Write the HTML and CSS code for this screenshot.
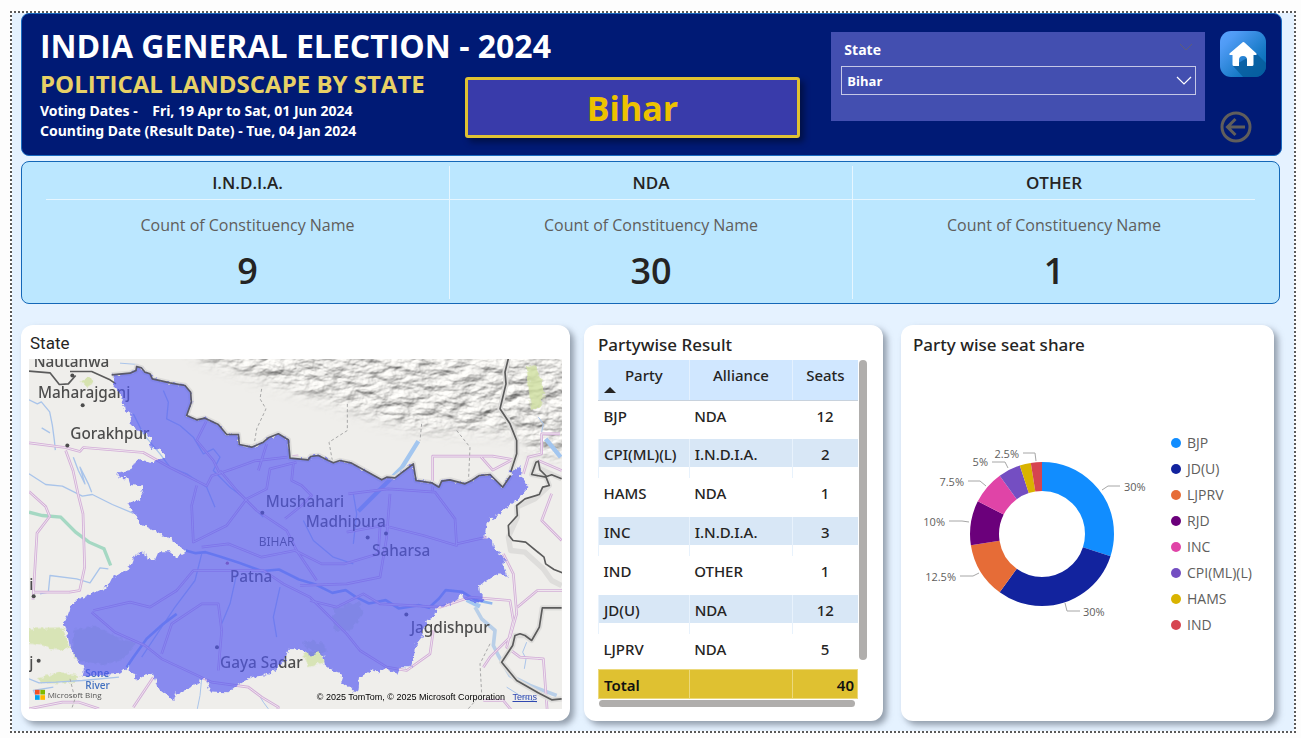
FILE: index.html
```html
<!DOCTYPE html>
<html lang="en">
<head>
<meta charset="utf-8">
<meta name="viewport" content="width=device-width, initial-scale=1">
<title>India General Election - 2024</title>
<link rel="stylesheet" href="styles.css">
</head>
<body>
<main class="report">
  <header class="banner">
    <h1 class="banner-title">INDIA GENERAL ELECTION - 2024</h1>
    <div class="banner-info">
      <h2 class="banner-subtitle">POLITICAL LANDSCAPE BY STATE</h2>
      <p class="banner-date">Voting Dates - &nbsp;&nbsp; Fri, 19 Apr to Sat, 01 Jun 2024</p>
      <p class="banner-date">Counting Date (Result Date) - Tue, 04 Jan 2024</p>
    </div>
    <div class="state-badge">Bihar</div>
    <div class="slicer">
      <div class="slicer-head">
        <label for="state-select">State</label>
        <button class="slicer-toggle" type="button" aria-label="Slicer options">
          <svg width="14" height="14" viewBox="0 0 14 14"><path d="M1 4l6 6 6-6" fill="none" stroke="#5d5d78" stroke-width="1"/></svg>
        </button>
      </div>
      <div class="select-wrap">
        <select id="state-select" class="slicer-select"><option>Bihar</option></select>
        <svg class="select-arrow" width="16" height="10" viewBox="0 0 16 10"><path d="M1 1l7 7 7-7" fill="none" stroke="#fff" stroke-width="1.2"/></svg>
      </div>
    </div>
    <nav class="banner-nav">
      <button class="nav-button" type="button" aria-label="Home">
        <svg width="46" height="46" viewBox="0 0 46 46">
          <defs>
            <linearGradient id="home-bg" x1="0" y1="0" x2="1" y2="1"><stop offset="0" stop-color="#5aa2ff"/><stop offset=".2" stop-color="#4f9bf5"/><stop offset=".7" stop-color="#1478c4"/><stop offset="1" stop-color="#0068b0"/></linearGradient>
            <clipPath id="home-clip"><rect width="46" height="46" rx="11"/></clipPath>
          </defs>
          <g clip-path="url(#home-clip)">
            <rect width="46" height="46" fill="url(#home-bg)"/>
            <path d="M36 22l12 12v14H25L13 35z" fill="#065a98" opacity=".75"/>
            <path d="M23 11L9.500 22.500q-.8 1.500 1 1.500h2v9.500q0 1.500 1.500 1.500h5v-6a4 4 0 0 1 8 0v6h5q1.500 0 1.500-1.500V24h2q1.800 0 1-1.500L24.500 11.500q-.8-.9-1.500-.5z" fill="#fff"/>
          </g>
        </svg>
      </button>
      <button class="nav-button" type="button" aria-label="Back">
        <svg width="32" height="32" viewBox="0 0 32 32" fill="none" stroke="#605e5c"><circle cx="16" cy="16" r="14" stroke-width="3"/><path d="M25 16H8M15.500 8l-8 8 8 8" stroke-width="3"/></svg>
      </button>
    </nav>
  </header>

  <section class="cards">
    <article class="card"><h3 class="card-title">I.N.D.I.A.</h3><p class="card-label">Count of Constituency Name</p><p class="card-value">9</p></article>
    <article class="card"><h3 class="card-title">NDA</h3><p class="card-label">Count of Constituency Name</p><p class="card-value">30</p></article>
    <article class="card"><h3 class="card-title">OTHER</h3><p class="card-label">Count of Constituency Name</p><p class="card-value">1</p></article>
  </section>

  <section class="panels">
    <article class="panel panel-map">
      <h3 class="map-title">State</h3>
      <div class="map">
        <svg class="map-art" viewBox="27 114 1599 1053" preserveAspectRatio="xMidYMid slice">
          <defs>
            <filter id="relief" x="0" y="0" width="1" height="1" color-interpolation-filters="sRGB">
              <feTurbulence type="fractalNoise" baseFrequency=".018 .032" numOctaves="4" seed="8"/>
              <feColorMatrix values="0 0 0 0 0 0 0 0 0 0 0 0 0 0 0 1 0 0 0 0"/>
              <feDiffuseLighting surfaceScale="9" lighting-color="#efeeeb" diffuseConstant="1.080"><feDistantLight azimuth="240" elevation="62"/></feDiffuseLighting>
            </filter>
            <filter id="soft" x="-.2" y="-.2" width="1.400" height="1.400"><feGaussianBlur stdDeviation="22"/></filter>
            <filter id="rough" x="-.05" y="-.05" width="1.100" height="1.100">
              <feTurbulence type="fractalNoise" baseFrequency=".07" numOctaves="2" seed="3" result="n"/>
              <feDisplacementMap in="SourceGraphic" in2="n" scale="20" xChannelSelector="R" yChannelSelector="G"/>
            </filter>
            <mask id="hills" maskUnits="userSpaceOnUse" x="27" y="114" width="1599" height="1053">
              <path d="M490 60L1700 60V400L1560 410 1500 340 1440 335 1200 325 1090 300 960 250 850 215 720 175 560 120z" fill="#fff" filter="url(#soft)"/>
            </mask>
            <g id="roads" fill="none" stroke-linejoin="round">
              <path d="M27 367l108 14 45 12 10-12 180 15 80 45 80 40 30 15 15-30 60-20 70-25 130-15M137 390l22 60 15 70 15 60 5 160-15 70-30 5-110 0M27 513l50 45 12 30-38 50-12 200M530 495l-15 60 5 110 100-50 60-80 60-30 10-60 80-20M600 450l50 60 60 60 90 60 30 60 60 90M560 300l-30 60 50 60 20 40M545 680l80-10 100 40 100-20 80 40 70 0 100-30 5-80M220 870l110-25 60 15 80-50 50-60h210l60 40 80 40 60 60 50 50 40 50 80 50 60 10 70-50 10-70M215 875l70 60 90 40 50 40 150 70 110 15 40 30 50 30-20 80M425 1000l30-90 90-60h50l10 80-10 120M400 1070l-60 90M27 1165l100-20 50 0 60 20M740 370l-25 80"/>
              <path d="M820 430l-5 50 30 15 30 30-30 30-50 40M985 520l120-15 140 10 60 80 5 80-100-30-120-30-110 20M1110 520l-10 130-20 120-100 20-140 5M1310 670l90-20M870 840l80 20 80-40 50 30 180 10 90-30 120 10 10 60-20 80 40 30 70 5 15 200M1238 510V407h180l60 10-60 32-35-40M1620 340h-55v60l-40 10-15 50M1555 420l70 30M1450 700l30 60 10 120-20 70-60 60-20 30M1492 860l60-50 75 0M1625 660l-60-60 30-80M1390 1140h60l50 60"/>
            </g>
          </defs>
          <rect x="27" y="114" width="1599" height="1053" fill="#efeeeb"/>
          <g mask="url(#hills)"><rect x="460" y="60" width="1200" height="400" filter="url(#relief)"/></g>
          <g fill="#cfe0a0" filter="url(#rough)">
            <path d="M1520 140l25-6 15 40 12 45-10 45-30 2-5-50z" opacity=".8"/>
            <path d="M182 180l28-8 10 14-20 14z" opacity=".8"/>
            <path d="M27 925l100-5 20 60-20 15-60-20-40-5zM50 1075l70-20 60 10-20 20-90 5z" opacity=".7"/>
            <path d="M850 995l50-5 15 35-50 15z" opacity=".7"/>
            <path d="M160 930l60-15 80 40 50 10-40 50-60 20-90-20z" opacity=".3" fill="#a9bf95"/>
            <path d="M940 860l80-15 10 30-40 60-50-10zM850 960l60 10 10 25-60-10z" opacity=".3" fill="#a9bf95"/>
          </g>
          <g fill="none" stroke="#a9c4ea" stroke-width="4" stroke-linejoin="round">
            <path d="M27 238l25 12 12-6 25 30 8 40 6 45 3 30M65 322l25 15M160 410l15 40 20 40-15-50 25 50 10 25M27 460l50 32 50 5 60 30 30-5 60 30 60 25M60 820l25-5 5-50 80 10 40 12 30-45 25 3M27 1075l30 12 50-2 80-5 110-10M100 1100l-60 10 10 20"/>
            <path d="M545 1075l-5 50-8 40M715 1120l15 25 15 20M1520 965l-12 30 10 20-5 30M1460 1100l40 25 50 20M300 128l55 4M1565 335l5-25-15-20" stroke-width="3"/>
            <path d="M430 210l15 35-5 50 40 20 40 35 30 50 30-15 20 25-20 40 50 50 40 30 60 60M340 280l30 60 50 60 30 40 50 20 60 40 25 60M545 700l-20 80-60 80-60 90-40 60M780 800l-20 90 10 60M650 760l-20 90-25 60M850 600l30 60 60 50 60 20M1000 520l10 60-10 90"/>
          </g>
          <path d="M1195 362l-50 80-130 130M1577 355l45 55M1340 838l40 20" fill="none" stroke="#a3c6ef" stroke-width="13"/>
          <path d="M1365 860l20 35 40 35-5 45 15 30 35 60 60 30 80 30" fill="none" stroke="#b9cfe8" stroke-width="11" stroke-linejoin="round"/>
          <path d="M497 690l30 8 30-3 40 12 60 20 70 25 50-5 60 30 50 15 50 25 40-8 30 20 40 20 50-10 40 25 60-10 30 8 30-28 20-25 50 5 40 25 50 10M320 1040l20-30 40-55 50-45 40-30" fill="none" stroke="#8fb6ee" stroke-width="8" stroke-linejoin="round"/>
          <path d="M27 575l40 10 55 5 45 45 40 30 45 20 20 50" fill="none" stroke="#a5d8c3" stroke-width="10"/>
          <use href="#roads" stroke="#d3aed8" stroke-width="8"/>
          <use href="#roads" stroke="#efe6ee" stroke-width="3"/>
          <g fill="none" stroke="#a7a7a7" stroke-width="3" stroke-dasharray="9 7"><path d="M725 205l-5 30 18 30-28 60-8 50M982 250v80l-55 35 10 55M1205 310l-5 50M1310 330l40 50-5 110M150 1075l15 60-10 30M1410 970l-30 60 5 90-45 50"/></g>
          <g fill="none" stroke="#dedddb" stroke-width="16" stroke-linejoin="round">
            <path d="M1465 114l-10 41 3 35-18 75 30 45 20 50v40l-18 55M1625 475l-65-30-12-20-13 37 43 8 10 25-43 40-55 25 2 30-27 60 7 40 43 5 55 50 25 35 30 15M1625 862h-58l-9 58-23 40-20-15-30 0-7 30-33 50 45 55 70 40 35 18 30-3"/>
            <path d="M275 163l55-5 18-8 2-12 14 4 11 13 15 5 7 15 53 12 45 8 17 20 2 30-14 40 30 13 25-5 40 19 25 30h35l3 30 37 8 35-15 15-13 30-12 30 18 5 55 55 5 7-10 23-3 30 15 15 7 20-7 35 8 90 50 15-8 25 2 55-42 8 50 47 7 22 13 8-18 25-4 45 12 20-10 23-15 32-3 38 38 24-35"/>
          </g>
          <g fill="none" stroke="#5b5b5b" stroke-width="5" stroke-linejoin="round">
            <path d="M27 152l63 5 28 35 27-2 22-25M150 153h65l55 25 18 12M1465 114l-10 41 3 35-18 75 30 45 20 50v40l-18 55M1625 475l-30-12-15 5-20-20-5-26-7 3-13 37 43 8 10 25-20 5-10 22-43 13-25 20 2 30-27 30 2 30 12 15 38 5 55 45 5 20 25 17 25 10M1625 862h-58l-9 58-23 40-20-15-15-5-15 5-7 30-33 50 45 55 70 40 35 18 30-3"/>
          </g>
          <g class="map-labels">
            <text x="41" y="139">Nautanwa</text><circle cx="157" cy="165" r="6"/>
            <text x="54" y="232">Maharajganj</text><circle cx="188" cy="254" r="6"/>
            <text x="151" y="356">Gorakhpur</text><circle cx="142" cy="375" r="6"/>
            <text x="737" y="558">Mushahari</text><circle cx="727" cy="577" r="6"/>
            <text x="857" y="618">Madhipura</text><circle cx="1043" cy="651" r="6"/>
            <text x="1056" y="707">Saharsa</text><circle cx="1098" cy="639" r="6"/>
            <text x="630" y="783">Patna</text><circle cx="622" cy="728" r="5" fill="#b06080"/>
            <text x="600" y="1041">Gaya Sadar</text><circle cx="591" cy="980" r="6"/>
            <text x="1172" y="938">Jagdishpur</text><circle cx="1159" cy="882" r="6"/>
            <text x="28" y="807">i</text><circle cx="41" cy="827" r="6"/>
            <text x="28" y="1041">j</text><circle cx="56" cy="1021" r="6"/>
            <text x="716" y="675" class="map-region">BIHAR</text>
            <text x="196" y="1069" class="map-river">Sone</text>
          </g>
          <path filter="url(#rough)" fill="#5058f2" fill-opacity=".66" d="M275 163L330 158 348 150 350 138 364 142 375 155 390 160 397 175 450 187 495 195 512 215 514 245 500 285 530 298 555 293 595 312 620 342 655 342 658 372 695 380 730 365 745 352 775 340 805 358 810 413 865 418 872 408 895 405 925 420 940 427 960 420 995 428 1085 478 1100 470 1125 472 1180 430 1188 480 1235 487 1257 500 1265 482 1290 478 1335 490 1355 480 1378 465 1410 462 1448 500 1472 465 1473 450 1505 437 1500 465 1525 500 1500 530 1460 560 1430 585 1400 610 1393 650 1415 658 1420 685 1455 710 1450 735 1460 770 1440 758 1410 775 1377 795 1380 815 1398 838 1385 848 1350 842 1325 826 1295 845 1275 858 1250 860 1245 888 1220 900 1205 950 1185 975 1182 1010 1172 1040 1140 1040 1132 1060 1100 1045 1075 1055 1055 1048 1020 1070 1015 1110 1005 1118 990 1100 960 1088 968 1060 930 1048 915 1035 910 1005 895 995 870 1005 850 990 805 985 795 1020 765 1050 730 1065 690 1070 650 1095 625 1115 570 1113 555 1070 535 1085 510 1100 485 1115 465 1120 460 1142 440 1120 415 1110 400 1062 372 1068 350 1080 340 1060 325 1038 300 1060 185 1068 190 1040 150 985 142 940 130 915 145 880 150 850 215 820 265 795 275 775 330 740 345 700 375 700 380 715 405 718 415 695 450 695 470 710 490 700 497 692 470 670 450 655 380 620 360 610 325 550 355 540 370 520 365 495 330 490 325 475 295 470 297 455 335 448 350 415 400 425 436 410 425 390 388 380 395 350 365 335 335 320 335 285 315 270 310 240 295 215 280 200 285 180z"/>
          <path fill="none" stroke="#5a5a6a" stroke-width="5" stroke-linejoin="round" d="M275 163l55-5 18-8 2-12 14 4 11 13 15 5 7 15 53 12 45 8 17 20 2 30-14 40 30 13 25-5 40 19 25 30h35l3 30 37 8 35-15 15-13 30-12 30 18 5 55 55 5 7-10 23-3 30 15 15 7 20-7 35 8 90 50 15-8 25 2 55-42 8 50 47 7 22 13 8-18 25-4 45 12 20-10 23-15 32-3 38 38 24-35"/>
          <text x="196" y="1105" class="map-river">River</text>
          <rect x="45" y="1108" width="14" height="14" fill="#f25022"/><rect x="61" y="1108" width="14" height="14" fill="#7fba00"/><rect x="45" y="1124" width="14" height="14" fill="#00a4ef"/><rect x="61" y="1124" width="14" height="14" fill="#ffb900"/>
          <text x="83" y="1132" class="map-brand">Microsoft Bing</text>
        </svg>
        <p class="map-credit">© 2025 TomTom, © 2025 Microsoft Corporation <a href="#terms">Terms</a></p>
      </div>
    </article>

    <article class="panel panel-table">
      <h3 class="panel-title">Partywise Result</h3>
      <div class="table-view">
        <table class="results">
          <colgroup><col class="col-party"><col class="col-alliance"><col class="col-seats"></colgroup>
          <thead><tr><th scope="col">Party<span class="sort-mark"></span></th><th scope="col">Alliance</th><th scope="col">Seats</th></tr></thead>
          <tbody>
            <tr><td>BJP</td><td>NDA</td><td>12</td></tr>
            <tr><td>CPI(ML)(L)</td><td>I.N.D.I.A.</td><td>2</td></tr>
            <tr><td>HAMS</td><td>NDA</td><td>1</td></tr>
            <tr><td>INC</td><td>I.N.D.I.A.</td><td>3</td></tr>
            <tr><td>IND</td><td>OTHER</td><td>1</td></tr>
            <tr><td>JD(U)</td><td>NDA</td><td>12</td></tr>
            <tr><td>LJPRV</td><td>NDA</td><td>5</td></tr>
          </tbody>
          <tfoot><tr><td>Total</td><td></td><td>40</td></tr></tfoot>
        </table>
        <div class="scroll-v"></div>
        <div class="scroll-h"></div>
      </div>
    </article>

    <article class="panel panel-pie">
      <h3 class="panel-title">Party wise seat share</h3>
      <div class="pie-body">
        <svg class="pie" width="246" height="190" viewBox="-124 -95 246 190">
          <g fill="none" stroke-width="29">
            <circle r="57.500" pathLength="100" stroke="#118dff" stroke-dasharray="30 70" stroke-dashoffset="25"/>
            <circle r="57.500" pathLength="100" stroke="#12239e" stroke-dasharray="30 70" stroke-dashoffset="-5"/>
            <circle r="57.500" pathLength="100" stroke="#e66c37" stroke-dasharray="12.500 87.500" stroke-dashoffset="-35"/>
            <circle r="57.500" pathLength="100" stroke="#6b007b" stroke-dasharray="10 90" stroke-dashoffset="-47.500"/>
            <circle r="57.500" pathLength="100" stroke="#e044a7" stroke-dasharray="7.500 92.500" stroke-dashoffset="-57.500"/>
            <circle r="57.500" pathLength="100" stroke="#744ec2" stroke-dasharray="5 95" stroke-dashoffset="-65"/>
            <circle r="57.500" pathLength="100" stroke="#d9b300" stroke-dasharray="2.500 97.500" stroke-dashoffset="-70"/>
            <circle r="57.500" pathLength="100" stroke="#d64550" stroke-dasharray="2.500 97.500" stroke-dashoffset="-72.500"/>
          </g>
          <path d="M60-44l6-4h12M23 69l2 8h13M-63 39l-6 3h-13M-73-12l-7-1h-13M-56-48l-6-5h-12M-34-66l-3-6h-13M-6-73l-1-8h-12" fill="none" stroke="#a6a6a6"/>
          <g class="pie-labels">
            <text x="82" y="-43">30%</text><text x="41" y="82">30%</text>
            <text x="-86" y="47" text-anchor="end">12.5%</text><text x="-97" y="-8" text-anchor="end">10%</text>
            <text x="-78" y="-48" text-anchor="end">7.5%</text><text x="-54" y="-68" text-anchor="end">5%</text>
            <text x="-23" y="-76" text-anchor="end">2.5%</text>
          </g>
        </svg>
        <ul class="legend">
          <li class="party-bjp">BJP</li><li class="party-jdu">JD(U)</li><li class="party-ljprv">LJPRV</li><li class="party-rjd">RJD</li>
          <li class="party-inc">INC</li><li class="party-cpi">CPI(ML)(L)</li><li class="party-hams">HAMS</li><li class="party-ind">IND</li>
        </ul>
      </div>
    </article>
  </section>
</main>
</body>
</html>
```

FILE: styles.css
```css
* { box-sizing: border-box; }

body {
  margin: 0;
  padding: 11px 5px 5px 10px;
  background: #fdfdfd;
  color: #252423;
  font-family: "Open Sans", "Noto Sans", sans-serif;
}

h1, h2, h3, p, ul { margin: 0; padding: 0; }

button { padding: 0; border: 0; background: none; cursor: pointer; }

svg { display: block; }

.report {
  padding: 2px 14px 12px 11px;
  background:
    repeating-linear-gradient(90deg, #5a5a5a 0 2px, #fff 2px 4px) top / 100% 2px no-repeat,
    repeating-linear-gradient(90deg, #5a5a5a 0 2px, #fff 2px 4px) bottom / 100% 2px no-repeat,
    repeating-linear-gradient(#5a5a5a 0 2px, #fff 2px 4px) left / 2px 100% no-repeat,
    repeating-linear-gradient(#5a5a5a 0 2px, #fff 2px 4px) right / 2px 100% no-repeat,
    #e5f2ff;
}

/* Banner */
.banner {
  display: grid;
  grid-template-columns: 425fr 336fr 420fr 46px;
  grid-template-areas: "title title slicer nav" "info badge slicer nav";
  grid-template-rows: 40px auto;
  min-height: 143px;
  padding: 12px 15px 8px 18px;
  border: 1px solid #1c6cc0;
  border-radius: 8px;
  background: #001a75;
  color: #fff;
}

.banner-title { grid-area: title; font-size: 32px; line-height: 40px; white-space: nowrap; }
.banner-info { grid-area: info; padding-top: 1px; white-space: nowrap; }
.banner-subtitle { color: #e8d166; font-size: 24px; line-height: 34px; }
.banner-date { font: 700 14px/20px "Noto Sans", sans-serif; }

.state-badge {
  grid-area: badge;
  display: grid;
  place-items: center;
  height: 61px;
  margin-top: 11px;
  border: 3px solid #e0c232;
  border-radius: 3px;
  background: #393baa;
  box-shadow: 4px 4px 6px rgba(0, 0, 0, .4);
  color: #edc200;
  font-size: 34px;
  font-weight: 700;
  line-height: 40px;
}

.slicer {
  grid-area: slicer;
  height: 89px;
  margin: 6px 15px 0 31px;
  padding: 4px 9px 0 10px;
  background: #434fb0;
}

.slicer-head {
  display: flex;
  align-items: flex-start;
  justify-content: space-between;
  height: 30px;
  padding: 4px 3px 0;
  font-size: 14px;
  font-weight: 700;
  line-height: 20px;
}

.select-wrap { position: relative; }

.slicer-select {
  appearance: none;
  width: 100%;
  height: 29px;
  padding: 0 5px;
  border: 1px solid #c5c8e6;
  border-radius: 0;
  background: transparent;
  color: #fff;
  font: 700 13px/20px "Open Sans", "Noto Sans", sans-serif;
}

.select-arrow { position: absolute; top: 10px; right: 4px; pointer-events: none; }

.banner-nav {
  grid-area: nav;
  display: flex;
  flex-direction: column;
  align-items: flex-start;
  gap: 34px;
  padding-top: 5px;
}

/* Alliance cards */
.cards {
  display: grid;
  grid-template-columns: repeat(3, 1fr);
  margin: 5px 2px 0 0;
  padding: 4px 24px;
  border: 1px solid #1468b8;
  border-radius: 8px;
  background: #bbe7ff;
  text-align: center;
}

.card { height: 133px; }
.card + .card { border-left: 1px solid #e6f6ff; }
.card-title { padding: 2px 0 1px; border-bottom: 1px solid #e6f6ff; font-size: 17px; font-weight: 600; line-height: 30px; }
.card-label { padding-top: 13px; color: #605e5c; font-size: 16px; line-height: 24px; }
.card-value { padding-top: 10px; font-size: 36px; font-weight: 600; line-height: 48px; }

/* Lower panels */
.panels {
  display: grid;
  grid-template-columns: 549fr 299fr 377fr;
  column-gap: 14px;
  margin: 21px 8px 0 0;
}

.panel {
  min-width: 0;
  height: 396px;
  border-radius: 12px;
  background: #fff;
  box-shadow: 4px 4px 6px rgba(90, 100, 115, .6);
}

.panel-title { font: 500 17px/24px "Noto Sans", sans-serif; }

.panel-map { display: flex; flex-direction: column; padding: 6px 8px 12px; }
.map-title { font: 400 17px/24px Roboto, sans-serif; padding: 0 1px; height: 28px; }
.map { position: relative; flex: 1; min-height: 0; overflow: hidden; }
.map-art { width: 100%; height: 100%; }
.map-labels { fill: #4c4c4c; font-family: "Noto Sans", sans-serif; font-size: 46px; font-weight: 500; }
.map-labels .map-region { font-size: 36px; font-weight: 400; }
.map-river { fill: #4472c0; font-size: 30px; font-weight: 600; }
.map-brand { fill: #555; font-size: 24px; }

.map-credit {
  position: absolute;
  right: 25px;
  bottom: 5px;
  color: #000;
  font: 9px/14px "Liberation Sans", sans-serif;
}

.map-credit a { margin-left: 5px; color: #3048b0; }

/* Results table */
.panel-table { padding: 8px 16px 14px 14px; }

.table-view {
  display: grid;
  grid-template-columns: 1fr 8px;
  gap: 1px;
  padding-top: 3px;
}

.results {
  width: 100%;
  border-collapse: collapse;
  table-layout: fixed;
  font-family: "Noto Sans", sans-serif;
  font-size: 15px;
  font-weight: 500;
  line-height: 20px;
}

.col-party { width: 35%; }
.col-alliance { width: 40%; }
.col-seats { width: 25%; }

.results th {
  position: relative;
  height: 40px;
  padding: 5px 0 0;
  border-left: 1px solid #e4f1ff;
  border-bottom: 1px solid #c8d2dd;
  background: #d0e7ff;
  font-weight: 500;
  vertical-align: top;
}

.sort-mark {
  position: absolute;
  left: 5px;
  bottom: 7px;
  border: 6px solid transparent;
  border-top: 0;
  border-bottom-color: #252423;
}

.results td { height: 39px; padding: 5px 5px 0; vertical-align: top; }
.results td:last-child { text-align: center; }
.results tbody tr:nth-child(even) td {
  border-left: 1px solid #e8f2fc;
  background: linear-gradient(#d8e7f6 28px, #fff 28px);
}
.results tbody tr:last-child td { height: 35px; }
.results tfoot td {
  height: 29px;
  border: 1px solid #ecd97c;
  background: #dfc131;
  color: #111;
  font-weight: 600;
}
.results tfoot td:last-child { padding-right: 3px; text-align: right; }

.scroll-v { height: 300px; border-radius: 4px; background: #b0aeac; }
.scroll-h { height: 7px; margin: 0 3px 0 1px; border-radius: 4px; background: #b0aeac; }

/* Seat share */
.panel-pie { margin-left: 4px; padding: 8px 12px; }

.pie-body {
  display: flex;
  align-items: center;
  gap: 7px;
  height: 354px;
}

.pie { flex: none; margin-left: 5px; }
.pie-labels { fill: #605e5c; font-size: 11px; }

.legend { list-style: none; color: #605e5c; font-size: 14px; line-height: 26px; }
.legend li { display: flex; align-items: center; gap: 6px; }
.legend li::before { content: ""; width: 10px; height: 10px; border-radius: 50%; background: currentColor; }
.party-bjp::before { color: #118dff; }
.party-jdu::before { color: #12239e; }
.party-ljprv::before { color: #e66c37; }
.party-rjd::before { color: #6b007b; }
.party-inc::before { color: #e044a7; }
.party-cpi::before { color: #744ec2; }
.party-hams::before { color: #d9b300; }
.party-ind::before { color: #d64550; }
```
